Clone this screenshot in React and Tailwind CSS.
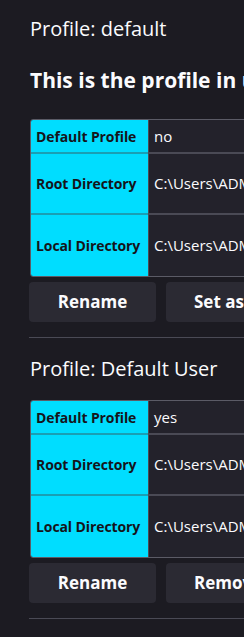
import React from 'react';

const profiles = [
    {
        name: 'default',
        inUse: true,
        isDefault: 'no',
        rootDir: 'C:\\Users\\ADMIN\\AppData\\Roaming\\Mozilla\\Firefox\\Profiles\\8x2kq1fd.default',
        localDir: 'C:\\Users\\ADMIN\\AppData\\Local\\Mozilla\\Firefox\\Profiles\\8x2kq1fd.default',
        actions: ['Rename', 'Set as default profile', 'Launch profile in new browser'],
    },
    {
        name: 'Default User',
        inUse: false,
        isDefault: 'yes',
        rootDir: 'C:\\Users\\ADMIN\\AppData\\Roaming\\Mozilla\\Firefox\\Profiles\\u3m0c7ra.Default User',
        localDir: 'C:\\Users\\ADMIN\\AppData\\Local\\Mozilla\\Firefox\\Profiles\\u3m0c7ra.Default User',
        actions: ['Rename', 'Remove', 'Launch profile in new browser'],
    },
];

const Row = ({ label, value, height, last }) => (
    <div className={`flex ${height}`}>
        <div className={`w-[117px] shrink-0 flex items-center pl-[5px] bg-[#00ddff] text-[#15141a] font-bold text-[14px] tracking-[-0.1px] whitespace-nowrap ${last ? '' : 'border-b-2 border-[#1a9fb4]'}`}>
            {label}
        </div>
        <div className={`flex-1 flex items-center pl-[5px] bg-[#23222b] border-l border-[#4a4a55] whitespace-nowrap text-[15px] ${last ? '' : 'border-b-2 border-b-[#4a4a55]'}`}>
            {value}
        </div>
    </div>
);

const ProfileSection = ({ profile, first }) => (
    <div className={first ? 'pt-[15px]' : 'pt-[17px]'}>
        <h2 className="text-[20px] leading-[28px] pl-px whitespace-nowrap">Profile: {profile.name}</h2>
        {profile.inUse && (
            <h3 className="mt-[21px] text-[21px] leading-[32px] font-bold pl-px whitespace-nowrap">
                This is the profile in use and it cannot be deleted.
            </h3>
        )}
        <div className={`${profile.inUse ? 'mt-[23px]' : 'mt-[17px]'} ml-px border border-[#5b5b66] rounded-[3px] overflow-hidden`}>
            <Row label="Default Profile" value={profile.isDefault} height="h-[34px]" />
            <Row label="Root Directory" value={profile.rootDir} height="h-[61px]" />
            <Row label="Local Directory" value={profile.localDir} height="h-[61px]" last />
        </div>
        <div className="mt-[5px] flex gap-[10px]">
            {profile.actions.map((a, i) => (
                <button
                    key={a}
                    className={`h-[40px] rounded-[4px] bg-[#2b2a33] font-bold text-[17px] text-[#fbfbfe] whitespace-nowrap ${i === 0 ? 'w-[127px]' : 'px-[28px]'}`}
                >
                    {a}
                </button>
            ))}
        </div>
        <div className="mt-[15px] h-px bg-[#4a4a55]" />
    </div>
);

export default function App() {
    return (
        <div className="w-[244px] h-[637px] overflow-hidden bg-[#1c1b22] text-[#fbfbfe] font-['Open_Sans',sans-serif]">
            <div className="w-[900px] pl-[29px]">
                {profiles.map((p, i) => (
                    <ProfileSection key={p.name} profile={p} first={i === 0} />
                ))}
            </div>
        </div>
    );
}
